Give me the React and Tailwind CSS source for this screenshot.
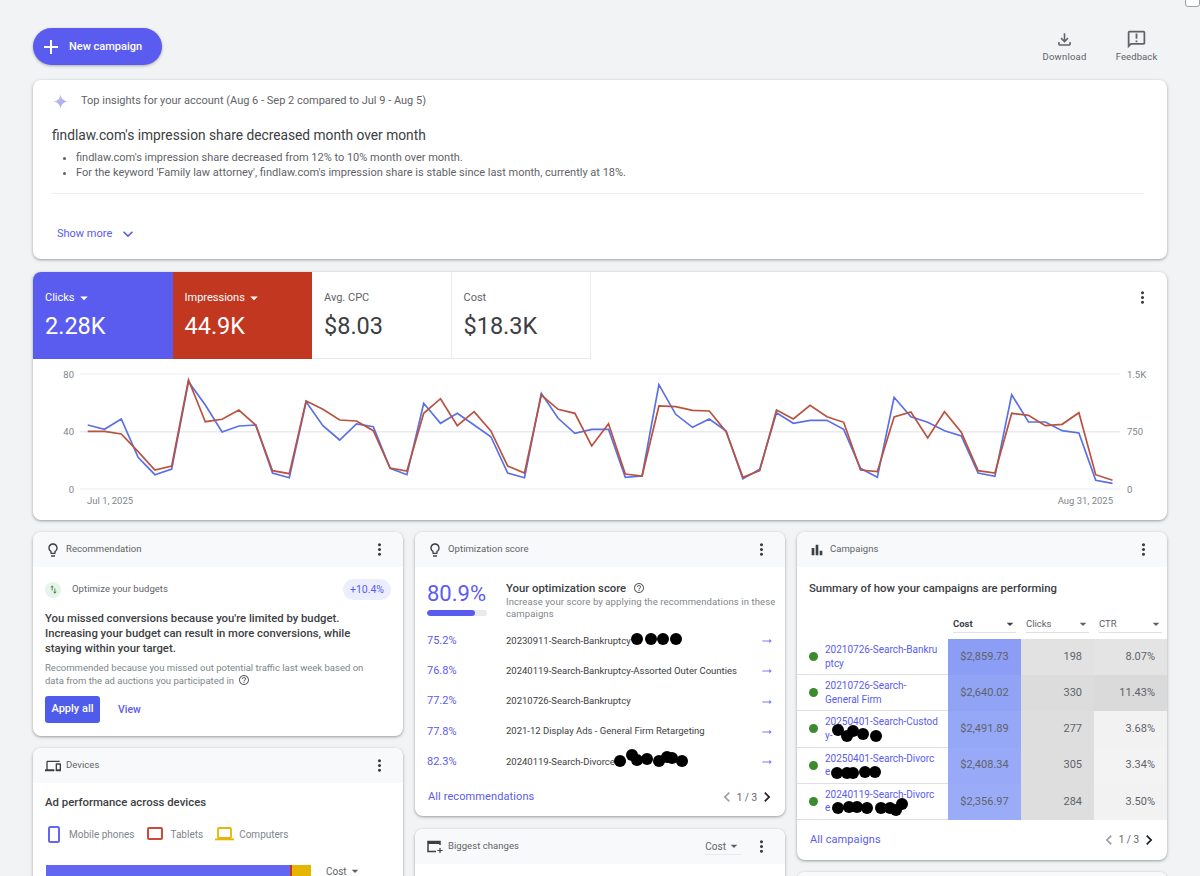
import {
  MdAdd,
  MdArrowDropDown,
  MdArrowRightAlt,
  MdBarChart,
  MdChevronLeft,
  MdChevronRight,
  MdHelpOutline,
  MdKeyboardArrowDown,
  MdMoreVert,
  MdOutlineAnnouncement,
  MdOutlineDevices,
  MdOutlineFileDownload,
  MdOutlineLightbulb,
  MdSwapVert,
} from 'react-icons/md'

const blue = [465, 478, 447, 562, 614, 597, 335, 405, 486, 468, 465, 609, 623, 395, 467, 510, 462, 470, 595, 614, 400, 460, 430, 465, 500, 609, 623, 370, 445, 490, 478, 478, 622, 618, 344, 433, 472, 447, 483, 626, 598, 428, 460, 451, 451, 478, 595, 622, 382, 440, 457, 482, 498, 609, 619, 374, 456, 456, 482, 489, 631, 640]
const red = [484, 484, 492, 545, 600, 588, 330, 455, 448, 420, 465, 602, 611, 393, 418, 450, 453, 482, 594, 603, 430, 386, 467, 425, 483, 588, 609, 375, 418, 430, 528, 461, 612, 618, 408, 410, 421, 423, 485, 622, 602, 420, 447, 406, 440, 457, 600, 605, 441, 426, 504, 425, 487, 602, 609, 430, 436, 467, 463, 428, 614, 631]

function toPoints(series) {
  return series.map((y, i) => `${(87.7 + 16.8 * i).toFixed(1)},${(270 + y / 3).toFixed(1)}`).join(' ')
}

const scores = [
  { pct: '75.2%', name: '20230911-Search-Bankruptcy' },
  { pct: '76.8%', name: '20240119-Search-Bankruptcy-Assorted Outer Counties' },
  { pct: '77.2%', name: '20210726-Search-Bankruptcy' },
  { pct: '77.8%', name: '2021-12 Display Ads - General Firm Retargeting' },
  { pct: '82.3%', name: '20240119-Search-Divorce' },
]

const campaigns = [
  { name: '20210726-Search-Bankruptcy', cost: '$2,859.73', clicks: '198', ctr: '8.07%', costBg: 'bg-[#8b9df4]', clicksBg: 'bg-[#e2e2e2]', ctrBg: 'bg-[#e4e4e4]' },
  { name: '20210726-Search-\nGeneral Firm', cost: '$2,640.02', clicks: '330', ctr: '11.43%', costBg: 'bg-[#90a3f5]', clicksBg: 'bg-[#dcdcdc]', ctrBg: 'bg-[#dadada]' },
  { name: '20250401-Search-Custody-', cost: '$2,491.89', clicks: '277', ctr: '3.68%', costBg: 'bg-[#95a8f7]', clicksBg: 'bg-[#dedede]', ctrBg: 'bg-[#f2f2f2]' },
  { name: '20250401-Search-Divorce', cost: '$2,408.34', clicks: '305', ctr: '3.34%', costBg: 'bg-[#98aaf7]', clicksBg: 'bg-[#dedede]', ctrBg: 'bg-[#f3f3f3]' },
  { name: '20240119-Search-Divorce', cost: '$2,356.97', clicks: '284', ctr: '3.50%', costBg: 'bg-[#9aacf8]', clicksBg: 'bg-[#dedede]', ctrBg: 'bg-[#f2f2f2]' },
]

const scoreBlobs = [[222, 107], [236, 107], [248, 107], [261, 107], [205, 229], [217, 223], [222, 228], [232, 227], [244, 229], [252, 225], [257, 226], [267, 229]]
const campaignBlobs = [[41, 198], [50, 204], [56, 199], [66, 202], [79, 204], [40, 241], [50, 241], [56, 241], [68, 240], [78, 240], [41, 276], [52, 275], [60, 275], [70, 276], [84, 276], [93, 276], [99, 278], [105, 272]]

function Blobs({ items }) {
  return (
    <svg className="absolute inset-0 w-full h-full pointer-events-none">
      {items.map(([x, y], i) => (
        <circle key={i} cx={x} cy={y} r="6" fill="#000" />
      ))}
    </svg>
  )
}

function Card({ children, className = '' }) {
  return (
    <div className={`relative bg-white rounded-lg overflow-hidden shadow-[0_1px_2px_rgba(60,64,67,0.3),0_1px_3px_1px_rgba(60,64,67,0.15)] ${className}`}>
      {children}
    </div>
  )
}

function CardHeader({ icon, title, children }) {
  return (
    <div className="h-[35px] bg-[#f8f9fa] flex items-center pl-3 pr-[14px]">
      <div className="w-[21px] flex items-center text-[#3c4043]">{icon}</div>
      <span className="text-[9.5px] tracking-[0.05px] -mt-[1px] text-[#5f6368]">{title}</span>
      <div className="ml-auto flex items-center gap-[10px]">
        {children}
        <MdMoreVert size={19} className="text-[#3c4043]" />
      </div>
    </div>
  )
}

function Pager() {
  return (
    <div className="flex items-center -mr-[4px] text-[10px] text-[#5f6368]">
      <MdChevronLeft size={20} className="text-[#9aa0a6]" />
      <span>1 / 3</span>
      <MdChevronRight size={20} className="text-[#202124]" />
    </div>
  )
}

function MetricTile({ label, value, bg = '', dark = false }) {
  return (
    <div className={`w-[139.5px] h-[87px] pl-3 pt-[19px] ${bg} ${dark ? 'text-white' : 'border-r border-b border-[#e8eaed] text-[#3c4043]'}`}>
      <div className="flex items-center h-[14px] text-[11px]">
        <span className={dark ? '' : 'text-[#5f6368]'}>{label}</span>
        {dark && <MdArrowDropDown size={18} className="-my-1" />}
      </div>
      <div className="mt-[6px] text-[23.5px] leading-[30px]">{value}</div>
    </div>
  )
}

function Chart() {
  return (
    <svg viewBox="33 359 1134 161" className="block w-full h-[161px]">
      {[374, 431.7, 489].map((y, i) => (
        <line key={y} x1="80" x2="1120" y1={y} y2={y} stroke={i === 1 ? '#e8eaed' : '#eceef0'} strokeWidth={i === 1 ? 1.5 : 1.2} />
      ))}
      <g fontSize="9.5" fill="#80868b" fontFamily="Roboto, sans-serif">
        <text x="74" y="377.5" textAnchor="end">80</text>
        <text x="74" y="435" textAnchor="end">40</text>
        <text x="74" y="492.5" textAnchor="end">0</text>
        <text x="1127" y="377.5">1.5K</text>
        <text x="1127" y="435">750</text>
        <text x="1127" y="492.5">0</text>
        <text x="87" y="504">Jul 1, 2025</text>
        <text x="1113" y="504" textAnchor="end">Aug 31, 2025</text>
      </g>
      <polyline points={toPoints(blue)} fill="none" stroke="#5b70e6" strokeWidth="1.7" />
      <polyline points={toPoints(red)} fill="none" stroke="#b9523f" strokeWidth="1.7" />
    </svg>
  )
}

export default function App() {
  return (
    <div className="relative h-[876px] overflow-hidden bg-[#f1f3f4] px-[33px] pt-[28px] font-['Roboto',sans-serif] text-[#3c4043]">
      <div className="absolute right-0 top-[-8px] w-[15px] h-[15px] border border-[#9aa0a6] rounded-[3px] bg-white" />

      <div className="flex justify-between h-[37px]">
        <button className="h-[37px] w-[129px] rounded-full bg-[#5a5cf0] text-white flex items-center pl-[6px] gap-[6px] text-[11px] font-medium shadow-[0_1px_3px_rgba(60,64,67,0.4)]">
          <MdAdd size={24} />
          <span className="mt-[2px]">New campaign</span>
        </button>
        <div className="flex gap-[29px] pr-[9px] text-[#5f6368]">
          <div className="flex flex-col items-center w-[43px]">
            <MdOutlineFileDownload size={19} className="mt-[2px]" />
            <span className="text-[9.5px] mt-[1px] tracking-[0.2px]">Download</span>
          </div>
          <div className="flex flex-col items-center w-[43px]">
            <MdOutlineAnnouncement size={21} className="mt-[1px]" />
            <span className="text-[9.5px] tracking-[0.1px]">Feedback</span>
          </div>
        </div>
      </div>

      <Card className="mt-[15px] h-[179px] px-[19px]">
        <div className="flex items-center h-[14px] mt-[14px] gap-[13px] pl-[1px]">
          <svg width="15" height="15" viewBox="0 0 16 16">
            <defs>
              <linearGradient id="spark" x1="0" y1="0" x2="1" y2="1">
                <stop offset="0" stopColor="#f2d9b0" />
                <stop offset="0.5" stopColor="#b4aef8" />
                <stop offset="1" stopColor="#9fb4f5" />
              </linearGradient>
            </defs>
            <path d="M8 0 C8.6 5 11 7.4 16 8 C11 8.6 8.6 11 8 16 C7.4 11 5 8.6 0 8 C5 7.4 7.4 5 8 0Z" fill="url(#spark)" />
          </svg>
          <span className="text-[11px] text-[#5f6368]">Top insights for your account (Aug 6 - Sep 2 compared to Jul 9 - Aug 5)</span>
        </div>
        <h2 className="mt-[18px] text-[13.75px] leading-[18px] text-[#3c4043]">findlaw.com's impression share decreased month over month</h2>
        <ul className="mt-[6px] list-disc pl-[24px] text-[11px] leading-[15px] text-[#5f6368]">
          <li>findlaw.com's impression share decreased from 12% to 10% month over month.</li>
          <li>For the keyword 'Family law attorney', findlaw.com's impression share is stable since last month, currently at 18%.</li>
        </ul>
        <div className="mt-[13px] border-t border-[#eceef0] mr-[4px]" />
        <div className="mt-[30px] ml-[5px] flex items-center gap-[6px] text-[11px] text-[#5a5cf0]">
          Show more
          <MdKeyboardArrowDown size={20} />
        </div>
      </Card>

      <Card className="mt-[13px] h-[248px]">
        <div className="flex">
          <MetricTile label="Clicks" value="2.28K" bg="bg-[#5a5cf0]" dark />
          <MetricTile label="Impressions" value="44.9K" bg="bg-[#c1371f]" dark />
          <MetricTile label="Avg. CPC" value="$8.03" />
          <MetricTile label="Cost" value="$18.3K" />
          <MdMoreVert size={19} className="ml-auto mr-[15px] mt-[16px] text-[#3c4043]" />
        </div>
        <Chart />
      </Card>

      <div className="mt-[12px] flex gap-[12px] items-start">
        <div className="w-[370px] flex flex-col gap-[12px]">
          <Card className="h-[204px]">
            <CardHeader icon={<MdOutlineLightbulb size={16} />} title="Recommendation" />
            <div className="px-3 pt-[12px]">
              <div className="flex items-center h-[21px]">
                <div className="w-[16px] h-[16px] rounded-full bg-[#e6f4ea] flex items-center justify-center text-[#3f8a4a]">
                  <MdSwapVert size={11} />
                </div>
                <span className="ml-[11px] text-[9.5px] tracking-[0.05px] text-[#5f6368]">Optimize your budgets</span>
                <span className="ml-auto h-[21px] w-[48px] rounded-full bg-[#eceefd] flex items-center justify-center text-[10.5px] text-[#5a5cf0]">+10.4%</span>
              </div>
              <p className="mt-[11px] pr-1 text-[11.3px] leading-[15px] font-medium text-[#3c4043]">
                You missed conversions because you're limited by budget. Increasing your budget can result in more conversions, while staying within your target.
              </p>
              <p className="mt-[5px] pr-[14px] text-[9.5px] leading-[13px] text-[#80868b]">
                Recommended because you missed out potential traffic last week based on data from the ad auctions you participated in
                <MdHelpOutline size={12} className="inline ml-[4px] -mt-[2px] text-[#5f6368]" />
              </p>
              <div className="mt-[9px] flex items-center">
                <button className="h-[27px] w-[55px] rounded-[3px] bg-[#4f5bea] text-white text-[11px] font-medium">Apply all</button>
                <span className="ml-[18px] text-[10.5px] font-medium text-[#5a5cf0]">View</span>
              </div>
            </div>
          </Card>

          <Card className="h-[160px]">
            <CardHeader icon={<MdOutlineDevices size={16} />} title="Devices" />
            <div className="px-3 pt-[12px]">
              <h3 className="text-[11.4px] leading-[15px] font-medium text-[#3c4043]">Ad performance across devices</h3>
              <div className="mt-[16px] flex items-center h-[16px] text-[10px] text-[#80868b]">
                <svg width="14" height="17" viewBox="0 0 14 17" className="ml-[2px]">
                  <rect x="2" y="1" width="10" height="15" rx="1.5" fill="none" stroke="#6366f1" strokeWidth="2" />
                </svg>
                <span className="ml-[8px]">Mobile phones</span>
                <svg width="16" height="14" viewBox="0 0 16 14" className="ml-[12px]">
                  <rect x="1" y="1" width="14" height="11" rx="1" fill="none" stroke="#cc4a36" strokeWidth="2" />
                </svg>
                <span className="ml-[8px]">Tablets</span>
                <svg width="19" height="14" viewBox="0 0 19 14" className="ml-[12px]">
                  <rect x="3" y="1" width="13" height="10" rx="1" fill="none" stroke="#e5b500" strokeWidth="1.8" />
                  <rect x="0" y="11.5" width="19" height="1.8" fill="#e5b500" />
                </svg>
                <span className="ml-[5px]">Computers</span>
              </div>
              <div className="mt-[23px] flex items-start">
                <div className="flex w-[265px] h-[60px] ml-[1px]">
                  <div className="w-[244px] bg-[#6366f1]" />
                  <div className="w-[2px] bg-[#c5371f]" />
                  <div className="w-[19px] bg-[#e5b500]" />
                </div>
                <div className="ml-[15px] -mt-[2px] flex items-center text-[10px] text-[#5f6368]">
                  Cost
                  <MdArrowDropDown size={16} />
                </div>
              </div>
            </div>
          </Card>
        </div>

        <div className="w-[370px] flex flex-col gap-[13px]">
          <Card className="h-[284px]">
            <CardHeader icon={<MdOutlineLightbulb size={16} />} title="Optimization score" />
            <div className="px-3 pt-[15px]">
              <div className="flex">
                <div className="w-[79px] shrink-0 -mt-[1px]">
                  <div className="text-[22px] leading-[26px] text-[#5a5cf0]">80.9%</div>
                  <div className="mt-[3px] w-[60px] h-[6px] rounded-full bg-[#e8eaed] overflow-hidden">
                    <div className="w-[48px] h-full rounded-full bg-[#5a5cf0]" />
                  </div>
                </div>
                <div className="flex-1 -mr-[8px]">
                  <div className="flex items-center text-[11.3px] leading-[14px] font-medium text-[#3c4043]">
                    Your optimization score
                    <MdHelpOutline size={12} className="ml-[7px] -mt-[2px] text-[#5f6368]" />
                  </div>
                  <p className="text-[9.5px] leading-[12px] tracking-[0.1px] text-[#80868b]">
                    Increase your score by applying the recommendations in these campaigns
                  </p>
                </div>
              </div>
              <div className="mt-[6px]">
                {scores.map(s => (
                  <div key={s.pct} className="flex items-center h-[30.3px]">
                    <span className="w-[79px] text-[11px] text-[#5a5cf0]">{s.pct}</span>
                    <span className="text-[9.5px] -mt-[1px] text-[#3c4043]">{s.name}</span>
                    <MdArrowRightAlt size={14} className="ml-auto -mr-[1px] text-[#7b7ff0]" />
                  </div>
                ))}
              </div>
              <div className="mt-[10px] flex items-center justify-between h-[20px]">
                <span className="ml-[1px] text-[11px] tracking-[0.1px] text-[#5a5cf0]">All recommendations</span>
                <Pager />
              </div>
            </div>
            <Blobs items={scoreBlobs} />
          </Card>

          <Card className="h-[60px]">
            <CardHeader
              icon={
                <svg width="16" height="14" viewBox="0 0 16 14" fill="none" stroke="#3c4043" strokeWidth="1.5">
                  <path d="M13 5V1.5H1v10h8" />
                  <path d="M1 3h12" strokeWidth="2" />
                  <path d="M13 8v5M10.5 10.5h5" strokeWidth="1.2" />
                </svg>
              }
              title="Biggest changes"
            >
              <div className="flex items-center text-[10px] text-[#5f6368] border-b border-[#e8eaed]">
                Cost
                <MdArrowDropDown size={16} />
              </div>
            </CardHeader>
          </Card>
        </div>

        <div className="w-[370px] flex flex-col gap-[12px]">
          <Card className="h-[328px]">
            <CardHeader icon={<MdBarChart size={16} />} title="Campaigns" />
            <h3 className="mt-[14px] px-3 text-[11.35px] leading-[15px] font-medium text-[#3c4043]">Summary of how your campaigns are performing</h3>
            <div className="mt-[20px] grid grid-cols-[151px_73px_73px_73px] h-[17px] text-[9.5px] text-[#5f6368]">
              <div />
              {['Cost', 'Clicks', 'CTR'].map((h, i) => (
                <div key={h} className={`ml-[5px] mr-[5px] flex items-center justify-between border-b border-[#e0e0e0] ${i === 0 ? 'font-bold text-[#3c4043]' : ''}`}>
                  {h}
                  <MdArrowDropDown size={16} className="-mr-[2px]" />
                </div>
              ))}
            </div>
            <div className="mt-[6px]">
              {campaigns.map(c => (
                <div key={c.cost} className="grid grid-cols-[151px_73px_73px_73px] h-[36.2px] text-[11px] text-[#5f6368]">
                  <div className="flex items-center border-b border-[#e0e0e0] pl-3 pr-[9px] gap-[7px]">
                    <span className="w-[9px] h-[9px] rounded-full bg-[#3c8a2e] shrink-0" />
                    <span className="text-[10px] leading-[13.5px] text-[#5a5cf0] break-all whitespace-pre-line">{c.name}</span>
                  </div>
                  <div className={`flex items-center justify-center ${c.costBg}`}>{c.cost}</div>
                  <div className={`flex items-center justify-end pr-3 ${c.clicksBg}`}>{c.clicks}</div>
                  <div className={`flex items-center justify-end pr-3 ${c.ctrBg}`}>{c.ctr}</div>
                </div>
              ))}
            </div>
            <div className="mt-[10px] px-3 flex items-center justify-between h-[20px]">
              <span className="ml-[1px] text-[11px] tracking-[0.1px] text-[#5a5cf0]">All campaigns</span>
              <Pager />
            </div>
            <Blobs items={campaignBlobs} />
          </Card>

          <Card className="h-[40px]">
            <div className="h-[35px] bg-[#f8f9fa]" />
          </Card>
        </div>
      </div>
    </div>
  )
}
